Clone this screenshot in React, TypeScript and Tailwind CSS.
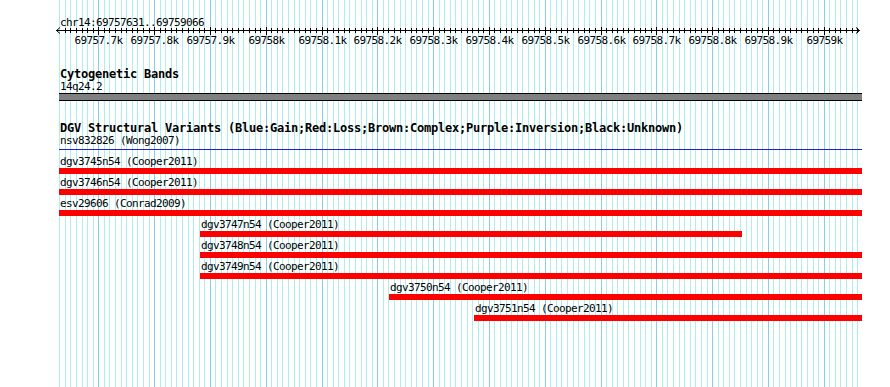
import React from "react";

// escala del panel: 0.558 px por pb, 69757700 cae en x=98.3
const xOf = (bp: number) => 98.3 + (bp - 69757700) * 0.558;

const gridStops: number[] = [];
for (let bp = 69757630; bp <= 69759060; bp += 10) gridStops.push(bp);

const majors = gridStops.filter((bp) => bp % 100 === 0 && bp >= 69757700);

type Variant = { name: string; start: number; end: number };

const variants: Variant[] = [
  { name: "dgv3745n54 (Cooper2011)", start: 59, end: 862 },
  { name: "dgv3746n54 (Cooper2011)", start: 59, end: 862 },
  { name: "esv29606 (Conrad2009)", start: 59, end: 862 },
  { name: "dgv3747n54 (Cooper2011)", start: 200, end: 742 },
  { name: "dgv3748n54 (Cooper2011)", start: 200, end: 862 },
  { name: "dgv3749n54 (Cooper2011)", start: 200, end: 862 },
  { name: "dgv3750n54 (Cooper2011)", start: 389, end: 862 },
  { name: "dgv3751n54 (Cooper2011)", start: 474, end: 862 },
];

const small = "text-[11px] leading-[11px] h-[11px] tracking-[-0.62px] whitespace-nowrap";
const bold = "text-[12px] leading-[12px] h-[12px] font-bold tracking-[-0.225px] whitespace-nowrap";

const Grid: React.FC = () => (
  <svg className="absolute inset-0" width={890} height={387}>
    {gridStops.map((bp) => {
      const x = Math.round(xOf(bp)) + 0.5;
      const major = bp % 100 === 0;
      return (
        <line
          key={bp}
          x1={x}
          x2={x}
          y1={0}
          y2={387}
          stroke={major ? "#87ceeb" : "#aeeeee"}
          strokeWidth={1}
        />
      );
    })}
  </svg>
);

const Ruler: React.FC = () => (
  <>
    <svg width={890} height={8} className="block -mt-[1px]">
      <line x1={56} x2={860} y1={3.5} y2={3.5} stroke="#000" />
      <polyline points="60,0.5 56.5,3.5 60,6.5" fill="none" stroke="#000" />
      <polyline points="856,0.5 859.5,3.5 856,6.5" fill="none" stroke="#000" />
      {gridStops
        .filter((bp) => bp > 69757630)
        .map((bp) => {
          const x = Math.round(xOf(bp)) + 0.5;
          const major = bp % 100 === 0;
          return (
            <line key={bp} x1={x} x2={x} y1={major ? 0 : 1} y2={major ? 8 : 6} stroke="#000" />
          );
        })}
    </svg>
    <div className={`relative ${small}`}>
      {majors.map((bp) => (
        <span
          key={bp}
          className="absolute top-0 -translate-x-1/2"
          style={{ left: Math.round(xOf(bp)) + 0.5 }}
        >
          {bp / 1000}k
        </span>
      ))}
    </div>
  </>
);

const App: React.FC = () => {
  return (
    <div className="relative w-[890px] h-[387px] overflow-hidden bg-white text-black font-['DejaVu_Sans_Mono',monospace]">
      <Grid />
      <div className="relative flex flex-col pt-[17px]">
        <div className={`${small} pl-[60px]`}>chr14:69757631..69759066</div>
        <Ruler />

        {/* Cytogenetic Bands */}
        <div className={`${bold} pl-[60px] mt-[22px]`}>Cytogenetic Bands</div>
        <div className={`${small} pl-[60px] mt-[1px]`}>14q24.2</div>
        <div className="ml-[59px] w-[803px] h-[8px] mt-[1px] border-y border-black bg-[#808080]" />

        {/* DGV */}
        <div className={`${bold} pl-[60px] mt-[21px]`}>
          DGV Structural Variants (Blue:Gain;Red:Loss;Brown:Complex;Purple:Inversion;Black:Unknown)
        </div>
        <div className={`${small} pl-[60px] mt-[1px]`}>nsv832826 (Wong2007)</div>
        <div className="ml-[59px] w-[803px] h-[1px] mt-[3px] bg-[#2020d0]" />

        <div className="flex flex-col gap-[3px] mt-[6px]">
          {variants.map((v) => (
            <div key={v.name} className="flex flex-col gap-[1px]">
              <div className={small} style={{ paddingLeft: v.start + 1 }}>
                {v.name}
              </div>
              <div
                className="h-[6px] bg-[#ff0000]"
                style={{ marginLeft: v.start, width: v.end - v.start }}
              />
            </div>
          ))}
        </div>
      </div>
    </div>
  );
};

export default App;
